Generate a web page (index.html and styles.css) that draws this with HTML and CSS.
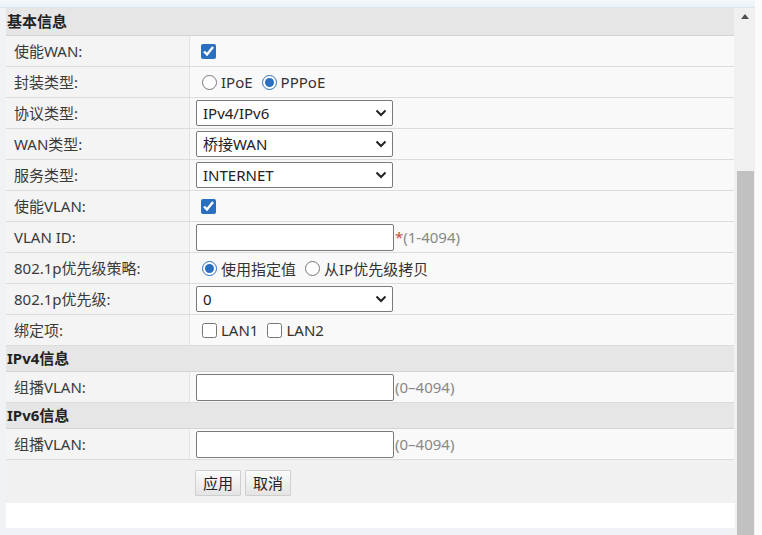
FILE: index.html
```html
<!DOCTYPE html>
<html lang="zh-CN">
<head>
<meta charset="utf-8">
<title>WAN</title>
<link rel="stylesheet" href="styles.css">
</head>
<body>
<div class="page">
  <div class="main">
    <div class="topband"></div>
    <div class="frame">
      <div class="content">
        <div class="tbl">
          <div class="sect first">基本信息</div>

          <div class="lbl">使能WAN:</div>
          <div class="val"><input type="checkbox" class="cb" checked></div>

          <div class="lbl">封装类型:</div>
          <div class="val"><label class="opt"><input type="radio" name="enc" class="rd">IPoE</label><label class="opt"><input type="radio" name="enc" class="rd" checked>PPPoE</label></div>

          <div class="lbl">协议类型:</div>
          <div class="val"><div class="selwrap"><select class="sel"><option>IPv4/IPv6</option></select><svg class="chev" width="12" height="8" viewBox="0 0 12 8"><path d="M1.5 1.5 L6 6 L10.5 1.5" fill="none" stroke="#222" stroke-width="2"/></svg></div></div>

          <div class="lbl">WAN类型:</div>
          <div class="val"><div class="selwrap"><select class="sel"><option>桥接WAN</option></select><svg class="chev" width="12" height="8" viewBox="0 0 12 8"><path d="M1.5 1.5 L6 6 L10.5 1.5" fill="none" stroke="#222" stroke-width="2"/></svg></div></div>

          <div class="lbl">服务类型:</div>
          <div class="val"><div class="selwrap"><select class="sel"><option>INTERNET</option></select><svg class="chev" width="12" height="8" viewBox="0 0 12 8"><path d="M1.5 1.5 L6 6 L10.5 1.5" fill="none" stroke="#222" stroke-width="2"/></svg></div></div>

          <div class="lbl">使能VLAN:</div>
          <div class="val"><input type="checkbox" class="cb" checked></div>

          <div class="lbl">VLAN ID:</div>
          <div class="val"><input type="text" class="txt"><span class="hint"><span class="req">*</span>(1-4094)</span></div>

          <div class="lbl">802.1p优先级策略:</div>
          <div class="val"><label class="opt"><input type="radio" name="pol" class="rd" checked>使用指定值</label><label class="opt"><input type="radio" name="pol" class="rd">从IP优先级拷贝</label></div>

          <div class="lbl">802.1p优先级:</div>
          <div class="val"><div class="selwrap"><select class="sel"><option>0</option></select><svg class="chev" width="12" height="8" viewBox="0 0 12 8"><path d="M1.5 1.5 L6 6 L10.5 1.5" fill="none" stroke="#222" stroke-width="2"/></svg></div></div>

          <div class="lbl">绑定项:</div>
          <div class="val"><label class="opt"><input type="checkbox" class="cb2">LAN1</label><label class="opt"><input type="checkbox" class="cb2">LAN2</label></div>

          <div class="sect">IPv4信息</div>

          <div class="lbl">组播VLAN:</div>
          <div class="val"><input type="text" class="txt"><span class="hint">(0–4094)</span></div>

          <div class="sect">IPv6信息</div>

          <div class="lbl">组播VLAN:</div>
          <div class="val"><input type="text" class="txt"><span class="hint">(0–4094)</span></div>

          <div class="btnrow">
            <button class="btn">应用</button><button class="btn">取消</button>
          </div>
        </div>
        <div class="whitegap"></div>
      </div>
      <div class="scrollbar">
        <div class="arrow"></div>
        <div class="thumb"></div>
      </div>
    </div>
  </div>
  <div class="rightstrip"></div>
</div>
</body>
</html>
```
FILE: styles.css
```css
html, body {
  margin: 0;
  padding: 0;
  width: 762px;
  height: 535px;
  overflow: hidden;
  background: #f0f2f5;
  font-family: "Noto Sans", "Noto Sans CJK SC", sans-serif;
  font-size: 15px;
  color: #333;
}
.page {
  display: flex;
  width: 762px;
  height: 535px;
}
.main {
  width: 755px;
  display: flex;
  flex-direction: column;
}
.topband {
  height: 7px;
  background: linear-gradient(#f5f8fc, #e8f0f7);
  border-bottom: 1px solid #dae6f0;
  flex: none;
}
.frame {
  flex: 1;
  display: flex;
  min-height: 0;
}
.content {
  width: 735px;
  padding-left: 6px;
  box-sizing: border-box;
  background: #f0f2f5;
}
.tbl {
  width: 728px;
  display: grid;
  grid-template-columns: 184px 1fr;
  background: #f9f9f9;
}
.sect {
  grid-column: 1 / 3;
  height: 25px;
  line-height: 25px;
  background: #e6e6e6;
  border-bottom: 1px solid #d4d4d4;
  font-weight: bold;
  padding-left: 1px;
  color: #222;
}
.sect.first {
  height: 27px;
  line-height: 27px;
}
.lbl {
  height: 30px;
  line-height: 30px;
  padding-left: 8px;
  background: #f4f4f4;
  border-bottom: 1px solid #dcdcdc;
  border-right: 1px solid #e2e2e2;
  white-space: nowrap;
  color: #3a3a3a;
}
.val {
  height: 30px;
  border-bottom: 1px solid #dcdcdc;
  display: flex;
  align-items: center;
  padding-left: 6px;
  background: #f9f9f9;
  white-space: nowrap;
}
.cb {
  width: 15px;
  height: 15px;
  margin: 0 0 0 5px;
  accent-color: #2a6fc0;
}
.cb2 {
  width: 15px;
  height: 15px;
  margin: 0 4px 0 6px;
}
.opt {
  display: flex;
  align-items: center;
  margin-right: 3px;
  color: #333;
}
.rd {
  width: 15px;
  height: 15px;
  margin: 0 4px 0 6px;
  accent-color: #2a6fc0;
}
.selwrap {
  position: relative;
  width: 197px;
  height: 26px;
}
.sel {
  appearance: none;
  -webkit-appearance: none;
  width: 197px;
  height: 26px;
  border: 1px solid #7a7a7a;
  border-radius: 2px;
  background: #fff;
  font-family: "Noto Sans", "Noto Sans CJK SC", sans-serif;
  font-size: 15px;
  color: #222;
  padding: 0 0 0 6px;
  margin: 0;
}
.chev {
  position: absolute;
  right: 6px;
  top: 9px;
  pointer-events: none;
}
.txt {
  width: 198px;
  height: 27px;
  box-sizing: border-box;
  border: 1px solid #7a7a7a;
  border-radius: 2px;
  background: #fff;
  margin: 0;
  padding: 0 4px;
}
.hint {
  color: #888;
  margin-left: 1px;
}
.req {
  color: #d04a4a;
}
.btnrow {
  grid-column: 1 / 3;
  height: 43px;
  background: #f1f1f1;
  display: flex;
  align-items: center;
  padding-left: 189px;
  gap: 4px;
}
.btn {
  height: 26px;
  padding: 0 7px;
  margin: 2px 0 0 0;
  font-family: "Noto Sans CJK SC", sans-serif;
  font-size: 15px;
  color: #222;
  border: 1px solid #cfcfcf;
  border-radius: 1px;
  background: linear-gradient(#fbfbfb, #e4e4e4);
}
.whitegap {
  width: 729px;
  height: 25px;
  background: #fff;
}
.scrollbar {
  width: 20px;
  background: #f0f0f0;
  display: flex;
  flex-direction: column;
  align-items: center;
}
.arrow {
  width: 0;
  height: 0;
  margin-top: 6px;
  border-left: 4px solid transparent;
  border-right: 4px solid transparent;
  border-bottom: 5px solid #505050;
}
.thumb {
  margin-top: 152px;
  width: 17px;
  flex: 1;
  background: #c1c1c1;
}
.rightstrip {
  width: 7px;
  background: #fbfbfb;
}
```
